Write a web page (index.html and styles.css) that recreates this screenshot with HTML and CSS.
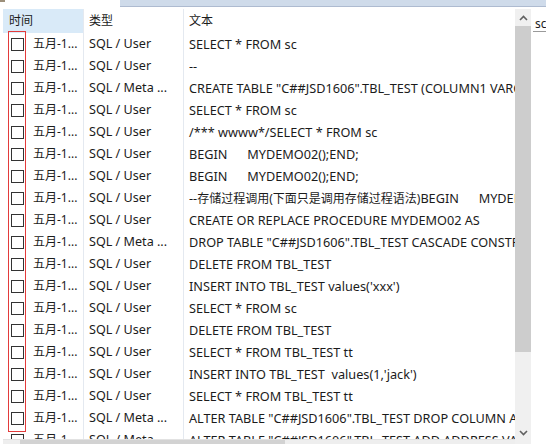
FILE: index.html
```html
<!DOCTYPE html>
<html>
<head>
<meta charset="utf-8">
<link rel="stylesheet" href="styles.css">
</head>
<body>
<div class="top">
  <div class="tab"><span class="tab-icon"></span><span class="tab-label">查询历史记录</span></div>
  <div class="tab-rest"></div>
</div>
<div class="main">
  <div class="grid">
    <div class="head">
      <div class="hc hc-time">时间</div>
      <div class="hc hc-type">类型</div>
      <div class="hc hc-text">文本</div>
    </div>
    <div class="rows">
      <div class="row"><span class="cb"><i></i></span><span class="c-date">五月-1...</span><span class="c-type">SQL / User</span><span class="c-text">SELECT * FROM sc</span></div>
      <div class="row"><span class="cb"><i></i></span><span class="c-date">五月-1...</span><span class="c-type">SQL / User</span><span class="c-text">--</span></div>
      <div class="row"><span class="cb"><i></i></span><span class="c-date">五月-1...</span><span class="c-type">SQL / Meta ...</span><span class="c-text">CREATE TABLE "C##JSD1606".TBL_TEST (COLUMN1 VARCHAR2(20))</span></div>
      <div class="row"><span class="cb"><i></i></span><span class="c-date">五月-1...</span><span class="c-type">SQL / User</span><span class="c-text">SELECT * FROM sc</span></div>
      <div class="row"><span class="cb"><i></i></span><span class="c-date">五月-1...</span><span class="c-type">SQL / User</span><span class="c-text">/*** wwww*/SELECT * FROM sc</span></div>
      <div class="row"><span class="cb"><i></i></span><span class="c-date">五月-1...</span><span class="c-type">SQL / User</span><span class="c-text">BEGIN      MYDEMO02();END;</span></div>
      <div class="row"><span class="cb"><i></i></span><span class="c-date">五月-1...</span><span class="c-type">SQL / User</span><span class="c-text">BEGIN      MYDEMO02();END;</span></div>
      <div class="row"><span class="cb"><i></i></span><span class="c-date">五月-1...</span><span class="c-type">SQL / User</span><span class="c-text">--<span class="zh">存储过程调用(下面只是调用存储过程语法)</span>BEGIN      MYDEMO02();END;</span></div>
      <div class="row"><span class="cb"><i></i></span><span class="c-date">五月-1...</span><span class="c-type">SQL / User</span><span class="c-text">CREATE OR REPLACE PROCEDURE MYDEMO02 AS</span></div>
      <div class="row"><span class="cb"><i></i></span><span class="c-date">五月-1...</span><span class="c-type">SQL / Meta ...</span><span class="c-text">DROP TABLE "C##JSD1606".TBL_TEST CASCADE CONSTRAINTS</span></div>
      <div class="row"><span class="cb"><i></i></span><span class="c-date">五月-1...</span><span class="c-type">SQL / User</span><span class="c-text">DELETE FROM TBL_TEST</span></div>
      <div class="row"><span class="cb"><i></i></span><span class="c-date">五月-1...</span><span class="c-type">SQL / User</span><span class="c-text">INSERT INTO TBL_TEST values('xxx')</span></div>
      <div class="row"><span class="cb"><i></i></span><span class="c-date">五月-1...</span><span class="c-type">SQL / User</span><span class="c-text">SELECT * FROM sc</span></div>
      <div class="row"><span class="cb"><i></i></span><span class="c-date">五月-1...</span><span class="c-type">SQL / User</span><span class="c-text">DELETE FROM TBL_TEST</span></div>
      <div class="row"><span class="cb"><i></i></span><span class="c-date">五月-1...</span><span class="c-type">SQL / User</span><span class="c-text">SELECT * FROM TBL_TEST tt</span></div>
      <div class="row"><span class="cb"><i></i></span><span class="c-date">五月-1...</span><span class="c-type">SQL / User</span><span class="c-text">INSERT INTO TBL_TEST  values(1,'jack')</span></div>
      <div class="row"><span class="cb"><i></i></span><span class="c-date">五月-1...</span><span class="c-type">SQL / User</span><span class="c-text">SELECT * FROM TBL_TEST tt</span></div>
      <div class="row"><span class="cb"><i></i></span><span class="c-date">五月-1...</span><span class="c-type">SQL / Meta ...</span><span class="c-text">ALTER TABLE "C##JSD1606".TBL_TEST DROP COLUMN ADDRESS</span></div>
      <div class="row"><span class="cb"><i></i></span><span class="c-date">五月-1...</span><span class="c-type">SQL / Meta ...</span><span class="c-text">ALTER TABLE "C##JSD1606".TBL_TEST ADD ADDRESS VARCHAR2(20)</span></div>
    </div>
    <div class="hscroll"><div class="hthumb"></div></div>
    <div class="mark"></div>
  </div>
  <div class="vscroll">
    <div class="vbtn"><svg width="9" height="6" viewBox="0 0 9 6"><path d="M1 5 L4.5 1.5 L8 5" fill="none" stroke="#606060" stroke-width="1.6"/></svg></div>
    <div class="vthumb"></div>
    <div class="vtrack"></div>
    <div class="vbtn"><svg width="9" height="6" viewBox="0 0 9 6"><path d="M1 1 L4.5 4.5 L8 1" fill="none" stroke="#606060" stroke-width="1.6"/></svg></div>
  </div>
  <div class="side">
    <div class="side-field">sc</div>
  </div>
</div>
</body>
</html>
```

FILE: styles.css
```css
html, body {
  margin: 0;
  padding: 0;
}
body {
  width: 546px;
  height: 444px;
  overflow: hidden;
  background: #ffffff;
  font-family: "Noto Sans", "Noto Sans CJK SC", sans-serif;
  font-size: 12px;
  color: #1b1b1b;
}
.top {
  display: flex;
  height: 7px;
}
.tab {
  width: 120px;
  background: #ffffff;
  overflow: hidden;
  display: flex;
  align-items: flex-end;
  gap: 30px;
}
.tab-icon {
  width: 5px;
  height: 14px;
  margin-bottom: 5px;
  background: #9c8f7a;
  flex: none;
}
.tab-label {
  line-height: 14px;
  margin-bottom: 5px;
  flex: none;
}
.tab-rest {
  flex: 1;
  background: #cfdbea;
  border-bottom: 1px solid #aebbd0;
}
.main {
  display: flex;
  height: 437px;
}
.grid {
  position: relative;
  margin-left: 3px;
  width: 512px;
  padding-top: 2px;
  display: flex;
  flex-direction: column;
  overflow: hidden;
}
.head {
  display: flex;
  height: 24px;
  flex: none;
}
.hc {
  line-height: 23px;
  white-space: nowrap;
}
.hc-time {
  width: 74px;
  padding-left: 6px;
  background: #d9eaf8;
}
.hc-type {
  width: 94px;
  padding-left: 5px;
  border-left: 1px solid #e4e9f0;
}
.hc-text {
  flex: 1;
  padding-left: 5px;
  border-left: 1px solid #e4e9f0;
}
.rows {
  flex: 1;
  overflow: hidden;
}
.row {
  display: flex;
  height: 22px;
  align-items: stretch;
  white-space: nowrap;
}
.row > span {
  line-height: 22px;
  overflow: hidden;
}
.cb {
  width: 27px;
  display: flex;
  align-items: center;
  flex: none;
}
.cb i {
  display: block;
  width: 11px;
  height: 11px;
  margin-left: 8px;
  border: 1px solid #333333;
  background: #ffffff;
}
.c-date {
  width: 50px;
  padding-left: 3px;
  flex: none;
}
.c-type {
  width: 94px;
  padding-left: 5px;
  border-left: 1px solid #e4e9f0;
  flex: none;
  font-size: 12.6px;
}
.c-text {
  flex: 1;
  padding-left: 5px;
  border-left: 1px solid #e4e9f0;
  white-space: pre;
  font-size: 12.7px;
}
.zh {
  font-size: 12px;
}
.hscroll {
  flex: none;
  height: 4px;
  background: #eeeeee;
  border-top: 1px solid #e2e2e2;
}
.hthumb {
  margin-left: 17px;
  width: 265px;
  height: 4px;
  background: #d2d2d2;
}
.mark {
  position: absolute;
  left: 5px;
  top: 24px;
  width: 16px;
  height: 399px;
  border: 1px solid #e33b3b;
}
.vscroll {
  width: 16px;
  margin-top: 2px;
  background: #f0f0f0;
  display: flex;
  flex-direction: column;
}
.vbtn {
  height: 17px;
  display: flex;
  align-items: center;
  justify-content: center;
  flex: none;
}
.vthumb {
  height: 326px;
  background: #cdcdcd;
  flex: none;
}
.vtrack {
  height: 72px;
  flex: none;
}
.side {
  width: 15px;
  padding-top: 10px;
  overflow: hidden;
}
.side-field {
  margin-left: 2px;
  padding-left: 2px;
  line-height: 14px;
  height: 14px;
  border-bottom: 1px solid #9a9a9a;
  white-space: nowrap;
}
```
